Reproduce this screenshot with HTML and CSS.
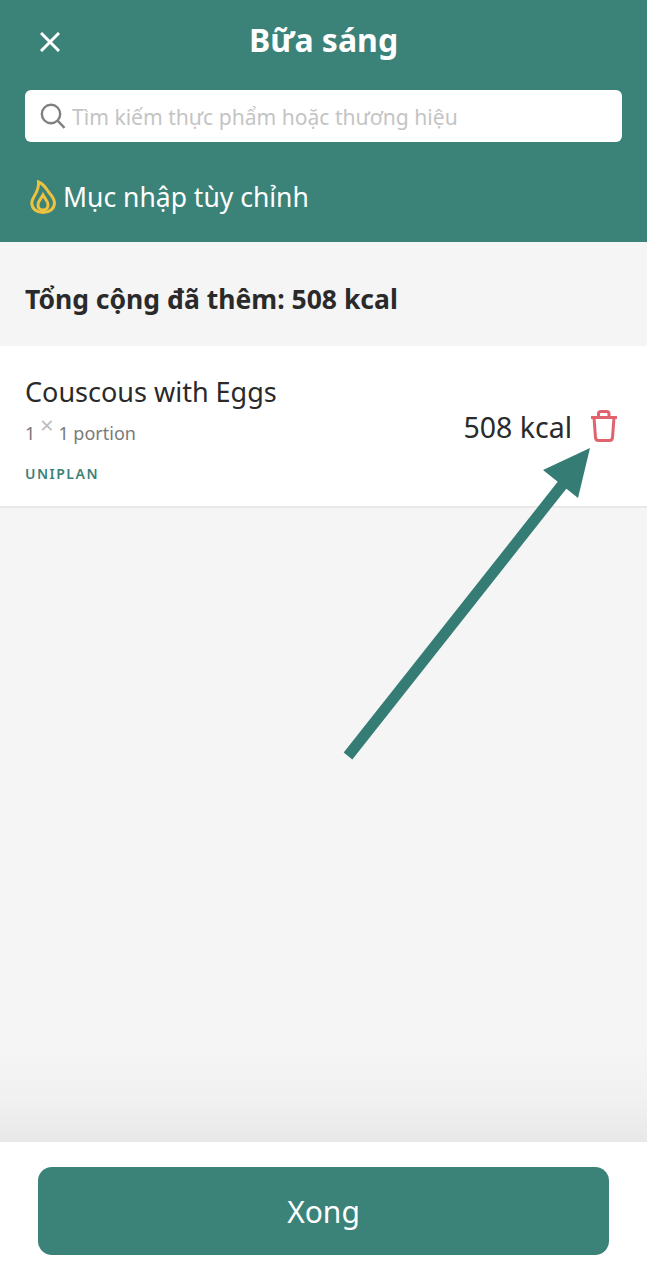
FILE: index.html
```html
<!DOCTYPE html>
<html lang="vi">
	<head>
		<title>Bữa sáng</title>
		<link rel="stylesheet" href="styles.css">
	</head>
	<body>
		<div class="page">
			<div class="header">
				<div class="title_row">
					<svg class="close_icon" viewBox="0 0 20 20"><path d="M1 1L19 19M19 1L1 19"/></svg>
					<h1 class="title">Bữa sáng</h1>
				</div>
				<div class="search">
					<svg class="search_icon" viewBox="0 0 26 26"><circle cx="11" cy="11" r="9.2"/><path d="M17.6 17.6L24.5 24.8"/></svg>
					<span class="search_text">Tìm kiếm thực phẩm hoặc thương hiệu</span>
				</div>
				<div class="custom_row">
					<svg class="flame_icon" viewBox="0 0 26 34"><path d="M8.500 2C14 4 16 8.500 19 12.500C22.500 16.500 24.500 19 24.500 23C24.500 29 19 32.500 13 32.500C7 32.500 1.800 29 1.800 23C1.800 17 9.500 12 8.500 2Z"/><path d="M13 15C15 19 18 21 18 25C18 28.200 15.800 30 13 30C10.200 30 8 28.200 8 25C8 21 11 19 13 15Z"/></svg>
					<span class="custom_text">Mục nhập tùy chỉnh</span>
				</div>
			</div>

			<div class="summary">Tổng cộng đã thêm: 508 kcal</div>

			<div class="item">
				<div class="item_info">
					<div class="item_name">Couscous with Eggs</div>
					<div class="item_portion">1 <span class="times">×</span> 1 portion</div>
					<div class="item_brand">UNIPLAN</div>
				</div>
				<div class="item_kcal">508 kcal</div>
				<svg class="trash_icon" viewBox="0 0 28 32"><path d="M1 7.500H27M4 7.500L5.500 27.500C5.700 29.500 7 30.500 8.500 30.500H19.500C21 30.500 22.300 29.500 22.500 27.500L24 7.500M8.500 7.500V3.500C8.500 2 9.500 1.500 11 1.500H16.500C18 1.500 19 2 19 3.500V7.500"/></svg>
			</div>

			<div class="empty"></div>

			<div class="footer">
				<div class="done_btn">Xong</div>
			</div>

			<!-- arrow drawn on top of the screenshot -->
			<svg class="arrow" viewBox="0 0 647 1280"><path d="M348 756L563 484"/><polygon points="590,448 543,470 578,498"/></svg>
		</div>
	</body>
</html>
```

FILE: styles.css
```css
*{margin:0px;padding:0px;box-sizing:border-box;}
body{font-family:"Noto Sans","Open Sans",sans-serif;background:#f5f5f5;color:#2a2a2a;}
.page{position:relative;width:647px;height:1280px;display:flex;flex-direction:column;overflow:hidden;}

.header{height:242px;background:#3b8278;padding:0 25px;flex-shrink:0;}
.title_row{height:90px;display:flex;align-items:center;justify-content:center;position:relative;padding-bottom:11px;}
.close_icon{position:absolute;left:15px;top:32px;width:20px;height:20px;fill:none;stroke:#fff;stroke-width:3;}
.title{font-size:32px;font-weight:700;color:#fff;line-height:40px;}

.search{height:52px;background:#fff;border-radius:6px;display:flex;align-items:center;padding-left:15px;}
.search_icon{width:26px;height:26px;fill:none;stroke:#808080;stroke-width:2.4;flex-shrink:0;}
.search_text{margin-left:6px;font-size:21.100px;color:#c4c4c4;white-space:nowrap;}

.custom_row{display:flex;align-items:center;margin-top:37px;padding-left:5px;}
.flame_icon{width:26px;height:34px;fill:none;stroke:#ecc23f;stroke-width:3;flex-shrink:0;}
.custom_text{margin-left:7px;font-size:26.500px;color:#fff;line-height:36px;white-space:nowrap;}

.summary{height:104px;padding:0 25px 29px;display:flex;align-items:flex-end;font-size:26.500px;font-weight:700;line-height:36px;}

.item{height:162px;background:#fff;border-bottom:2px solid #e8e8e8;padding:0 29px 0 25px;display:flex;align-items:center;}
.item_info{flex:1;align-self:flex-start;padding-top:28px;}
.item_name{font-size:27px;line-height:36px;color:#2a2a2a;}
.item_portion{font-size:18px;line-height:26px;margin-top:10px;color:#7a7a7a;}
.times{font-size:24px;color:#bdbdbd;line-height:20px;position:relative;top:-6px;}
.item_brand{font-size:14px;font-weight:600;letter-spacing:1.500px;line-height:20px;margin-top:18px;color:#3b8278;}
.item_kcal{font-size:28.500px;color:#2a2a2a;margin-right:18px;margin-top:2px;}
.trash_icon{width:28px;height:32px;fill:none;stroke:#e0646e;stroke-width:3;margin-bottom:1px;}

.empty{flex:1;background:linear-gradient(to bottom,#f5f5f5 0,#f5f5f5 540px,#f1f1f1 590px,#e8e8e8 100%);}

.footer{height:138px;background:#fff;padding:25px 38px 0;flex-shrink:0;}
.done_btn{height:88px;background:#3b8278;border-radius:14px;display:flex;align-items:center;justify-content:center;font-size:30px;color:#fff;}

.arrow{position:absolute;left:0;top:0;width:647px;height:1280px;pointer-events:none;}
.arrow path{stroke:#357c75;stroke-width:11;fill:none;}
.arrow polygon{fill:#357c75;}
```
